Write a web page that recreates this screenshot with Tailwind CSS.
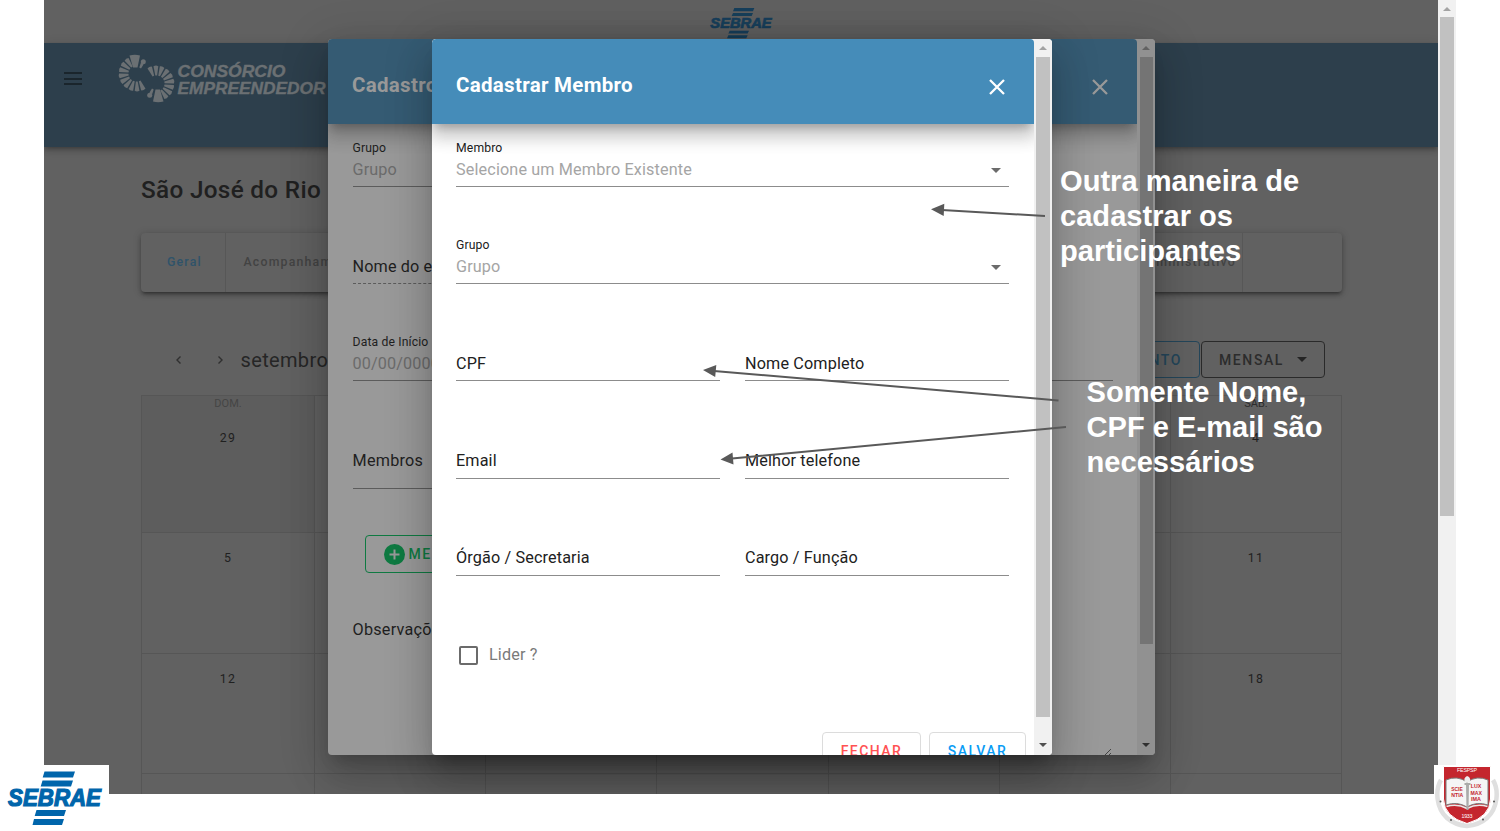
<!DOCTYPE html>
<html lang="pt-BR">
<head>
<meta charset="utf-8">
<title>Consórcio Empreendedor</title>
<script src="https://cdn.jsdelivr.net/npm/@tailwindcss/browser@4"></script>
</head>
<body class="relative w-[1500px] h-[831px] overflow-hidden bg-white font-['Roboto',sans-serif]">

<!-- Page under the dialogs -->
<div class="ml-[44px] flex h-[794px] w-[1412px]">
  <div class="flex w-[1394px] flex-col overflow-hidden bg-[#616161]">
    <header class="flex h-[43px] shrink-0 justify-center pt-[7px]">
      <svg class="h-[32px] w-[64px] overflow-visible" viewBox="0 0 96 58" preserveAspectRatio="none" fill="#173f5b">
        <path d="M38 2h30l-2 5.500H36zM36 11h30l-2 5.500H34zM31 43h29l-2 5H29zM29 51h29l-2 5.500H27z"/>
        <text x="2" y="38" font-family="Liberation Sans" font-weight="700" font-style="italic" font-size="27" textLength="92" lengthAdjust="spacingAndGlyphs" stroke="#173f5b" stroke-width="1.300">SEBRAE</text>
      </svg>
    </header>
    <nav class="relative flex h-[104px] shrink-0 bg-[#2d3f4c] pl-[20px] pt-[9px] shadow-[0_2px_4px_-1px_rgba(0,0,0,.2),0_4px_5px_rgba(0,0,0,.14),0_1px_10px_rgba(0,0,0,.12)]">
      <div class="mt-[20px] flex h-[13px] w-[18px] flex-col justify-between">
        <span class="h-[2px] bg-[#1a252c]"></span><span class="h-[2px] bg-[#1a252c]"></span><span class="h-[2px] bg-[#1a252c]"></span>
      </div>
      <svg class="ml-[34px] h-[52px] w-[214px]" viewBox="116 52 214 52" fill="#6b7073">
        <defs>
          <path id="w" d="M-.9 -8L-2.400 -17.3Q0 -18.7 2.400 -17.3L.9 -8z"/>
          <g id="fan">
            <path d="M129.500 55.500Q135 54 140 55.500L137.500 67.500H133z"/>
            <circle cx="143.300" cy="61.700" r="2.500"/><path d="M141 62.500L143.500 64.500L141 68.500L139.300 67.500z"/>
            <g transform="translate(136.500 73.500)">
              <use href="#w" transform="rotate(-35)"/><use href="#w" transform="rotate(-56)"/><use href="#w" transform="rotate(-77)"/><use href="#w" transform="rotate(-98)"/><use href="#w" transform="rotate(-119)"/><use href="#w" transform="rotate(-140)"/><use href="#w" transform="rotate(-161)"/><use href="#w" transform="rotate(-182)"/><use href="#w" transform="rotate(-203)"/>
            </g>
          </g>
        </defs>
        <use href="#fan"/><use href="#fan" transform="rotate(180 146.500 78.500)"/>
        <g font-family="Liberation Sans" font-weight="700" font-style="italic" font-size="17" stroke="#6b7073" stroke-width=".4">
          <text x="177.500" y="76.500" textLength="108" lengthAdjust="spacingAndGlyphs">CONSÓRCIO</text>
          <text x="177.500" y="94" textLength="148" lengthAdjust="spacingAndGlyphs">EMPREENDEDOR</text>
        </g>
      </svg>
    </nav>
    <main class="flex flex-col px-[97px] pt-[27px]">
      <h1 class="h-[32px] text-[24.300px] font-medium leading-[32px] tracking-[.32px] text-[#202020]">São José do Rio Preto</h1>
      <div class="mt-[27px] flex h-[59px] w-[1201px] rounded-sm bg-[#616161] text-[12.300px] font-medium leading-[59px] tracking-[1.200px] text-[#434343] shadow-[0_3px_3px_-2px_rgba(0,0,0,.3),0_3px_4px_rgba(0,0,0,.22),0_1px_8px_rgba(0,0,0,.18)]">
        <span class="w-[85px] border-r border-[#575757] pl-[26px] text-[#2f536a]">Geral</span>
        <span class="pl-[17.500px]">Acompanhamento</span>
        <span class="ml-auto w-[124px] border-r border-[#575757] pr-[6px] text-right">Administrativo</span>
        <span class="w-[99px]"></span>
      </div>
      <div class="mt-[49px] flex h-[37px] w-[1184px] items-center text-[#262626]">
        <svg class="ml-[33px] h-[10px] w-[10px]" viewBox="0 0 10 10" fill="none" stroke="#303030" stroke-width="1.400"><path d="M6.500 1.500L3 5l3.500 3.500"/></svg>
        <svg class="ml-[31px] h-[10px] w-[10px]" viewBox="0 0 10 10" fill="none" stroke="#303030" stroke-width="1.400"><path d="M3.500 1.500L7 5 3.500 8.500"/></svg>
        <span class="ml-[15.500px] text-xl tracking-[.35px]">setembro 2021</span>
        <div class="ml-auto flex h-[37px] text-[14px] font-medium leading-[36px] tracking-[1.600px]">
          <span class="rounded border border-[#24465a] px-[17px] text-[#24465a]">EVENTO</span>
          <span class="ml-px flex w-[124px] items-center rounded border border-[#2a2a2a] pl-[17px] text-[#2c2c2c]">MENSAL<i class="ml-[13px] border-x-[5px] border-t-[5px] border-x-transparent border-t-[#242424]"></i></span>
        </div>
      </div>
      <div class="mt-[17px] grid w-[1201px] grid-cols-[173px_171px_171px_172px_171px_171px_171px] grid-rows-[137px_121px_120px_121px] border-l border-t border-[#565656] text-center text-[12.300px] tracking-[1.300px] text-[#202020] *:border-b *:border-r *:border-[#565656] *:leading-[50px]">
        <div class="bg-[#5d5d5d]"><p class="h-[17px] text-[11px] leading-[16px] tracking-normal text-[#454545]">DOM.</p>29</div>
        <div></div><div></div><div></div><div></div><div></div>
        <div><p class="h-[17px] text-[11px] leading-[16px] tracking-normal text-[#2c2c2c]">SÁB.</p>4</div>
        <div>5</div><div></div><div></div><div></div><div></div><div></div><div>11</div>
        <div>12</div><div></div><div></div><div></div><div></div><div></div><div>18</div>
        <div></div><div></div><div></div><div></div><div></div><div></div><div></div>
      </div>
    </main>
  </div>
  <div class="flex w-[18px] flex-col items-center bg-[#f1f1f1]">
    <i class="mt-[7px] h-[4px] border-x-[4px] border-b-[4px] border-x-transparent border-b-[#a3a3a3]"></i>
    <span class="mt-[6px] h-[499px] w-[14px] bg-[#c1c1c1]"></span>
  </div>
</div>

<!-- Dialog layer, clipped to the page viewport -->
<div class="absolute left-[44px] top-0 h-[794px] w-[1394px] overflow-hidden">

<!-- Dialog behind: group registration -->
<section class="absolute left-[284px] top-[39px] flex h-[716px] w-[827px] overflow-hidden rounded bg-[#999] text-[16.200px] leading-6 tracking-[.14px] text-[#1f1f1f] shadow-[0_11px_15px_-7px_rgba(0,0,0,.2),0_24px_38px_3px_rgba(0,0,0,.14),0_9px_46px_8px_rgba(0,0,0,.12)]">
  <div class="flex w-[809px] flex-col">
    <header class="relative flex h-[85px] shrink-0 items-center rounded-t bg-[#355b73] pl-[24px] pr-[28px] pt-[7px] text-[20.500px] font-bold tracking-[.3px] text-[#999] shadow-[0_7px_8px_-4px_rgba(0,0,0,.2),0_12px_17px_2px_rgba(0,0,0,.14),0_5px_22px_4px_rgba(0,0,0,.12)]">
      <span>Cadastro</span>
      <svg class="ml-auto mt-[3px] h-[18px] w-[18px]" viewBox="0 0 18 18" stroke="#999" stroke-width="2.300"><path d="M2 2l14 14M16 2L2 16"/></svg>
    </header>
    <div class="flex flex-col pl-[24.500px] pr-[24px]">
      <div class="flex h-[63px] w-[520px] flex-col justify-end border-b border-[#5c5c5c] pb-[4px]"><span class="h-5 text-[12.200px] leading-5">Grupo</span><span class="text-[#6b6b6b]">Grupo</span></div>
      <div class="flex h-[97px] w-[520px] flex-col justify-end border-b border-dashed border-[#5c5c5c] pb-[4px]">Nome do evento</div>
      <div class="flex h-[97px] flex-col justify-end border-b border-[#5c5c5c] pb-[4px]"><span class="h-5 text-[12.200px] leading-5">Data de Início</span><span class="text-[#6b6b6b]">00/00/0000</span></div>
      <div class="flex h-[108px] w-[520px] flex-col justify-end border-b border-[#5c5c5c] pb-[15px] tracking-[.25px]">Membros</div>
      <div class="ml-[12px] mt-[46px] flex h-[38px] w-[140px] items-center rounded border border-[#0f7a42] pl-[18px] text-[14px] font-medium tracking-[1.500px] text-[#0f7a42]">
        <svg class="mr-[4px] h-[21px] w-[21px]" viewBox="0 0 21 21"><circle cx="10.500" cy="10.500" r="10.500" fill="#0f7a42"/><path d="M10.500 5.500v10M5.500 10.500h10" stroke="#999" stroke-width="2"/></svg>MEMBRO
      </div>
      <div class="mt-[45px] h-[136px] tracking-[.25px]">Observações</div>
    </div>
  </div>
  <div class="relative flex w-[18px] flex-col items-center bg-[#919191]">
    <i class="mt-[7px] h-[4px] border-x-[4px] border-b-[4px] border-x-transparent border-b-[#626262]"></i>
    <span class="mt-[7px] h-[587px] w-[13px] bg-[#747474]"></span>
    <i class="mb-[8px] mt-auto h-[4px] border-x-[4px] border-t-[4px] border-x-transparent border-t-[#303030]"></i>
    <svg class="absolute bottom-0 left-[-32px] h-[6px] w-[7px]" viewBox="0 0 7 6" stroke="#444"><path d="M0 6L6 0M4 6L6 4"/></svg>
  </div>
</section>

<!-- Front dialog: member registration -->
<section class="absolute left-[388px] top-[39px] flex h-[716px] w-[620px] overflow-hidden rounded bg-white text-[16.200px] leading-6 tracking-[.14px] text-[#212121] shadow-[0_11px_15px_-7px_rgba(0,0,0,.2),0_24px_38px_3px_rgba(0,0,0,.14),0_9px_46px_8px_rgba(0,0,0,.12)]">
  <div class="flex w-[602px] flex-col overflow-hidden">
    <header class="relative flex h-[85px] shrink-0 items-center rounded-t bg-[#458cb9] pl-[24px] pr-[28px] pt-[7px] text-[20.500px] font-bold tracking-[.3px] text-white shadow-[0_7px_8px_-4px_rgba(0,0,0,.2),0_12px_17px_2px_rgba(0,0,0,.14),0_5px_22px_4px_rgba(0,0,0,.12)]">
      <span>Cadastrar Membro</span>
      <svg class="ml-auto mt-[3px] h-[18px] w-[18px]" viewBox="0 0 18 18" stroke="#fff" stroke-width="2.300"><path d="M2 2l14 14M16 2L2 16"/></svg>
    </header>
    <div class="flex flex-col pl-[24px] pr-[25px]">
      <div class="flex h-[63px] flex-col justify-end border-b border-[#8c8c8c] pb-[4px]"><span class="h-5 text-[12.200px] leading-5">Membro</span><span class="flex items-center justify-between pr-[8px] text-[#a5a5a5]">Selecione um Membro Existente<i class="border-x-[5px] border-t-[5px] border-x-transparent border-t-[#6b6b6b]"></i></span></div>
      <div class="flex h-[97px] flex-col justify-end border-b border-[#8c8c8c] pb-[4px]"><span class="h-5 text-[12.200px] leading-5">Grupo</span><span class="flex items-center justify-between pr-[8px] text-[#a5a5a5]">Grupo<i class="border-x-[5px] border-t-[5px] border-x-transparent border-t-[#6b6b6b]"></i></span></div>
      <div class="grid grid-cols-[264px_264px] grid-rows-[97px_98px_97px] justify-between *:flex *:flex-col *:justify-end *:border-b *:border-[#8c8c8c] *:pb-[5px]">
        <div class="!pb-[4px]">CPF</div><div class="!pb-[4px]">Nome Completo</div>
        <div>Email</div><div>Melhor telefone</div>
        <div>Órgão / Secretaria</div><div>Cargo / Função</div>
      </div>
      <div class="mt-[67px] flex h-[24px] items-center text-[#7a7a7a]"><span class="ml-[3px] mr-[11px] h-[19px] w-[19px] rounded-xs border-2 border-[#6b6b6b]"></span>Lider ?</div>
    </div>
    <div class="mr-[8px] mt-[65px] flex shrink-0 justify-end gap-[8px] text-center text-[14px] font-medium leading-[36px] tracking-[1.450px] *:h-[38px] *:rounded *:border *:border-[#dcdcdc]">
      <span class="w-[99px] text-[#ff5252]">FECHAR</span><span class="w-[97px] text-[#0a9cf5]">SALVAR</span>
    </div>
  </div>
  <div class="flex w-[18px] flex-col items-center bg-[#f1f1f1]">
    <i class="mt-[7px] h-[4px] border-x-[4px] border-b-[4px] border-x-transparent border-b-[#a3a3a3]"></i>
    <span class="mt-[7px] h-[660px] w-[14px] bg-[#c1c1c1]"></span>
    <i class="mb-[8px] mt-auto h-[4px] border-x-[4px] border-t-[4px] border-x-transparent border-t-[#505050]"></i>
  </div>
</section>
</div>

<!-- Slide annotations -->
<svg class="absolute left-0 top-0 h-[831px] w-[1500px]" viewBox="0 0 1500 831" stroke="#595959" stroke-width="2" fill="#595959">
  <path d="M1045 216L942 210M1058.500 400.500L714 371M1066 427L732 458.500"/>
  <path stroke="none" d="M931 209.300L944.300 203.700L943.700 216zM703 370L716.300 365L715.200 377zM720.500 459.500L732.500 452.500L733.500 464.500z"/>
</svg>
<p class="absolute left-[1060px] top-[164px] w-[300px] font-['Liberation_Sans',sans-serif] text-[29.100px] font-bold leading-[35px] text-white">Outra maneira de<br>cadastrar os<br>participantes</p>
<p class="absolute left-[1086.500px] top-[375px] w-[300px] font-['Liberation_Sans',sans-serif] text-[29.100px] font-bold leading-[35px] text-white">Somente Nome,<br>CPF e E-mail são<br>necessários</p>

<!-- Corner logos -->
<div class="absolute left-0 top-[765px] h-[66px] w-[109px] bg-white">
  <svg class="h-[66px] w-[109px]" viewBox="0 0 109 66" fill="#0065ab">
    <path d="M44.500 6.500H75l-2 6H42.700zM42.500 15.500H73l-2 6H40.700zM36.500 45H66l-2 6H34.700zM34 54H64l-2 6H32.500z"/>
    <text x="8" y="40.700" font-family="Liberation Sans" font-weight="700" font-style="italic" font-size="23" textLength="93" lengthAdjust="spacingAndGlyphs" stroke="#0065ab" stroke-width="1.200">SEBRAE</text>
  </svg>
</div>
<div class="absolute left-[1434px] top-[765px] h-[66px] w-[66px] bg-white">
  <svg class="h-[66px] w-[66px]" viewBox="0 0 66 66">
    <path d="M7 15C1 25 2 43 13 53Q21 60 33 61Q45 60 53 53C64 43 65 25 59 15" fill="none" stroke="#dfdfdf" stroke-width="4.500"/>
    <path d="M9.500 1.500H56.500V34Q56 52 33 58.500Q10 52 9.500 34z" fill="#c4262e" stroke="#fff"/>
    <path d="M12 15Q23 10 33 17Q43 10 54 15V40Q43 36 33 42Q23 36 12 40z" fill="#f5f5f5" stroke="#7b7b7b" stroke-width="1"/>
    <path d="M12.500 41.500Q23 38 33 43.500Q43 38 53.500 41.500" fill="none" stroke="#e8e8e8" stroke-width="1.500"/>
    <path d="M32 19h3l-.5 26h-2zM30.500 18h6v2h-6z" fill="#aaa"/><path d="M31 17Q29 13 33 11Q37 12 36 17z" fill="#eee"/>
    <g font-family="Liberation Sans" text-anchor="middle" font-weight="700" font-size="5.800" fill="#c4262e">
      <text x="23" y="25.500" textLength="11.500" lengthAdjust="spacingAndGlyphs">SCIE</text><text x="23.300" y="32" textLength="12" lengthAdjust="spacingAndGlyphs">NTIA</text><text x="42" y="22.500" textLength="10.500" lengthAdjust="spacingAndGlyphs">LUX</text><text x="42.300" y="29.500" textLength="11.500" lengthAdjust="spacingAndGlyphs">MAX</text><text x="42" y="36" textLength="10" lengthAdjust="spacingAndGlyphs">IMA</text>
      <g fill="#fff" font-weight="400"><text x="33" y="7.300" font-size="5.300" textLength="20">FESPSP</text><text x="33" y="52.500" font-size="5.300" textLength="11">1933</text></g>
    </g>
    <g fill="#555"><circle cx="6.500" cy="36.500" r="1"/><circle cx="60" cy="36.500" r="1"/><circle cx="17" cy="55" r="1"/><circle cx="49" cy="54.500" r="1"/></g>
  </svg>
</div>
</body>
</html>
